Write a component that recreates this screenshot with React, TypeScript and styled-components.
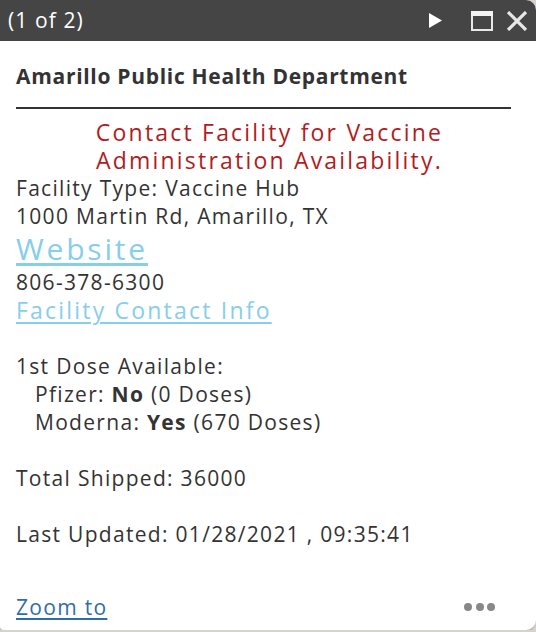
import React from 'react';
import styled, { createGlobalStyle } from 'styled-components';

const GlobalStyle = createGlobalStyle`
  html, body {
    margin: 0;
    padding: 0;
    background: #d6d3cc;
  }
  body {
    font-family: "Open Sans", "Liberation Sans", sans-serif;
    color: #333;
  }
`;

const Popup = styled.div`
  width: 536px;
  height: 630px;
  background: #fff;
  border-radius: 0 10px 10px 4px;
  overflow: hidden;
  display: flex;
  flex-direction: column;
  box-shadow: 0 2px 0 #bdbdbd;
`;

const Header = styled.div`
  height: 41px;
  background: #454545;
  display: flex;
  align-items: center;
  padding: 0 8px;
  color: #fff;
`;

const HeaderTitle = styled.div`
  flex: 1;
  font-size: 21px;
  letter-spacing: 1.1px;
  padding-bottom: 1px;
`;

const HeaderButtons = styled.div`
  display: flex;
  align-items: center;
`;

const IconButton = styled.div<{ $w: number; $ml: number }>`
  width: ${p => p.$w}px;
  height: 22px;
  margin-left: ${p => p.$ml}px;
  display: flex;
  align-items: center;
  justify-content: center;
`;

const Body = styled.div`
  flex: 1;
  display: flex;
  flex-direction: column;
  padding: 0 25px 0 16px;
`;

const Title = styled.h2`
  margin: 0;
  padding: 21px 0 17px;
  font-size: 21px;
  font-weight: 700;
  letter-spacing: 0.7px;
  color: #333;
  line-height: 28px;
  border-bottom: 2px solid #333;
`;

const Content = styled.div`
  padding-top: 9px;
  font-size: 21px;
  line-height: 28px;
  letter-spacing: 1.3px;
  color: #333;
`;

const Notice = styled.div`
  color: #b01c22;
  text-align: center;
  font-size: 23px;
  line-height: 28px;
  letter-spacing: 2.2px;
  padding-left: 12px;
`;

const Line = styled.div<{ $indent?: boolean }>`
  padding-left: ${p => (p.$indent ? '19px' : '0')};
  min-height: 28px;
`;

const Link = styled.a<{ $big?: boolean }>`
  display: block;
  width: max-content;
  color: #87ceeb;
  text-decoration: underline;
  text-underline-offset: 3px;
  font-size: ${p => (p.$big ? '30px' : '23px')};
  line-height: ${p => (p.$big ? '38px' : '28px')};
  letter-spacing: ${p => (p.$big ? '2.8px' : '2.2px')};
`;

const Footer = styled.div`
  height: 28px;
  display: flex;
  align-items: center;
  justify-content: space-between;
  padding: 0 41px 9px 16px;
`;

const ZoomLink = styled.a`
  font-size: 21px;
  letter-spacing: 1.3px;
  color: #2f6ea8;
  text-decoration: underline;
  text-underline-offset: 3px;
  line-height: 28px;
`;

const Dots = styled.div`
  display: flex;
  gap: 3.5px;
  span {
    width: 8px;
    height: 8px;
    border-radius: 50%;
    background: #888;
  }
`;

const Spacer = styled.div`
  flex: 1;
`;

export default function App() {
  return (
    <>
      <GlobalStyle />
      <Popup>
        <Header>
          <HeaderTitle>(1 of 2)</HeaderTitle>
          <HeaderButtons>
            <IconButton $w={16} $ml={0}>
              <svg width="15" height="15" viewBox="0 0 15 15">
                <polygon points="1,0 14,7.5 1,15" fill="#fff" />
              </svg>
            </IconButton>
            <IconButton $w={22} $ml={28}>
              <svg width="22" height="20" viewBox="0 0 22 20">
                <rect x="1" y="2.5" width="20" height="16.5" fill="none" stroke="#e8e8e8" strokeWidth="2" />
                <rect x="0" y="0" width="22" height="5" fill="#f2f2f2" />
              </svg>
            </IconButton>
            <IconButton $w={22} $ml={13}>
              <svg width="22" height="20" viewBox="0 0 22 20">
                <path d="M2 1 L20 19 M20 1 L2 19" stroke="#e6e6e6" strokeWidth="3.2" strokeLinecap="butt" />
              </svg>
            </IconButton>
          </HeaderButtons>
        </Header>
        <Body>
          <Title>Amarillo Public Health Department</Title>
          <Content>
            <Notice>
              Contact Facility for Vaccine
              <br />
              Administration Availability.
            </Notice>
            <Line>Facility Type: Vaccine Hub</Line>
            <Line>1000 Martin Rd, Amarillo, TX</Line>
            <Link $big href="#">Website</Link>
            <Line>806-378-6300</Line>
            <Link href="#">Facility Contact Info</Link>
            <Line />
            <Line>1st Dose Available:</Line>
            <Line $indent>
              Pfizer: <b>No</b> (0 Doses)
            </Line>
            <Line $indent>
              Moderna: <b>Yes</b> (670 Doses)
            </Line>
            <Line />
            <Line>Total Shipped: 36000</Line>
            <Line />
            <Line>Last Updated: 01/28/2021 , 09:35:41</Line>
          </Content>
          <Spacer />
        </Body>
        <Footer>
          <ZoomLink href="#">Zoom to</ZoomLink>
          <Dots>
            <span />
            <span />
            <span />
          </Dots>
        </Footer>
      </Popup>
    </>
  );
}
